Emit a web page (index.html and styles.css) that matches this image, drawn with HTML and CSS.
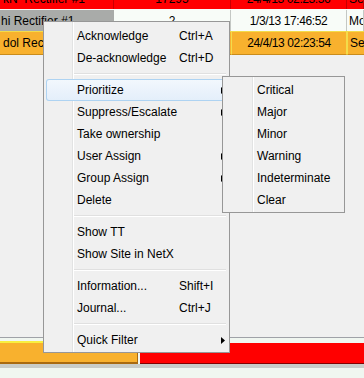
FILE: index.html
```html
<!DOCTYPE html>
<html>
<head>
<meta charset="utf-8">
<link rel="stylesheet" href="styles.css">
</head>
<body>
<div class="screen">
  <div class="grid">
    <div class="row r1">
      <div class="c c1">kN&nbsp; Rectifier #1</div>
      <div class="c c2">17295</div>
      <div class="c c3">24/4/13 02:23:56</div>
      <div class="c c4">Se</div>
    </div>
    <div class="row r2">
      <div class="c c1">hi Rectifier #1</div>
      <div class="c c2">2</div>
      <div class="c c3">1/3/13 17:46:52</div>
      <div class="c c4">Mo</div>
    </div>
    <div class="row r3">
      <div class="c c1">dol Rectifier #1</div>
      <div class="c c2">5</div>
      <div class="c c3">24/4/13 02:23:54</div>
      <div class="c c4">Se</div>
    </div>
  </div>
  <div class="spacer"></div>
  <div class="bottom">
    <div class="brow">
      <div class="bc orange"></div>
      <div class="bc red"></div>
    </div>
    <div class="hbar"></div>
  </div>

  <div class="menu">
    <div class="item"><span>Acknowledge</span><span>Ctrl+A</span></div>
    <div class="item"><span>De-acknowledge</span><span>Ctrl+D</span></div>
    <div class="sep"></div>
    <div class="item hot"><span>Prioritize</span><span></span><svg class="arrow" width="4" height="7" viewBox="0 0 4 7"><polygon points="0,0 4,3.5 0,7" fill="#000"/></svg></div>
    <div class="item"><span>Suppress/Escalate</span><span></span><svg class="arrow" width="4" height="7" viewBox="0 0 4 7"><polygon points="0,0 4,3.5 0,7" fill="#000"/></svg></div>
    <div class="item"><span>Take ownership</span></div>
    <div class="item"><span>User Assign</span><span></span><svg class="arrow" width="4" height="7" viewBox="0 0 4 7"><polygon points="0,0 4,3.5 0,7" fill="#000"/></svg></div>
    <div class="item"><span>Group Assign</span><span></span><svg class="arrow" width="4" height="7" viewBox="0 0 4 7"><polygon points="0,0 4,3.5 0,7" fill="#000"/></svg></div>
    <div class="item"><span>Delete</span></div>
    <div class="sep"></div>
    <div class="item"><span>Show TT</span></div>
    <div class="item"><span>Show Site in NetX</span></div>
    <div class="sep"></div>
    <div class="item"><span>Information...</span><span>Shift+I</span></div>
    <div class="item"><span>Journal...</span><span>Ctrl+J</span></div>
    <div class="sep"></div>
    <div class="item"><span>Quick Filter</span><span></span><svg class="arrow" width="4" height="7" viewBox="0 0 4 7"><polygon points="0,0 4,3.5 0,7" fill="#000"/></svg></div>
  </div>

  <div class="submenu">
    <div class="sitem">Critical</div>
    <div class="sitem">Major</div>
    <div class="sitem">Minor</div>
    <div class="sitem">Warning</div>
    <div class="sitem">Indeterminate</div>
    <div class="sitem">Clear</div>
  </div>
</div>
</body>
</html>
```

FILE: styles.css
```css
html, body {
  margin: 0;
  padding: 0;
}
body {
  background: #f0f0f0;
  font-family: "Liberation Sans", Arial, sans-serif;
  font-size: 12px;
  color: #000;
}
.screen {
  position: relative;
  width: 364px;
  height: 378px;
  overflow: hidden;
  display: flex;
  flex-direction: column;
}
.grid {
  display: flex;
  flex-direction: column;
}
.row {
  display: grid;
  grid-template-columns: 114px 117px 116px 1fr;
}
.c {
  white-space: nowrap;
  overflow: hidden;
  display: flex;
  align-items: center;
  box-sizing: border-box;
}
.c2, .c3 {
  justify-content: center;
}
.c3 {
  letter-spacing: -0.4px;
}
.c4 {
  padding-left: 2px;
}
.r1 {
  height: 22px;
  margin-top: -12px;
  border-bottom: 1px solid #f8fcf8;
  box-sizing: border-box;
}
.r1 .c {
  background: #ff0000;
  border-right: 1px solid #c80000;
}
.r1 .c1 {
  padding-left: 3px;
}
.r2 {
  height: 21px;
}
.r2 .c {
  background: #f8fcf8;
  border-right: 1px solid #c4c8c4;
}
.r2 .c1 {
  background: #a9aba9;
  border-right: 0;
  padding-left: 1px;
}
.r3 {
  height: 24px;
}
.r3 .c {
  background: #f8b12e;
  border-top: 1px solid #f3dc4a;
  border-left: 1px solid #f3dc4a;
  border-bottom: 1px solid #c98c1c;
}
.r3 .c1 {
  border-left: 0;
  padding-left: 3px;
}
.r3 .c3 {
  border-right: 1px solid #f3dc4a;
}
.spacer {
  flex: 1;
}
.bottom {
  border-top: 1px solid #a0a2a8;
  background: #f0f6f0;
  padding-top: 3px;
}
.brow {
  display: flex;
  height: 23px;
  gap: 2px;
}
.bc {
  box-sizing: border-box;
}
.orange {
  width: 138px;
  background: #f8b12e;
  border-top: 2px solid #f8f040;
  border-right: 1px solid #a86a10;
  border-bottom: 2px solid #a86a10;
}
.red {
  flex: 1;
  background: #ff0000;
  border-top: 2px solid #f0f6f0;
  border-bottom: 1px solid #800000;
}
.hbar {
  height: 4px;
  background: #c8ccc8;
  margin-bottom: 10px;
}

/* context menu */
.menu {
  position: absolute;
  left: 43px;
  top: 21px;
  width: 187px;
  box-sizing: border-box;
  border: 1px solid #979797;
  padding: 3px 2px 1px 2px;
  background: linear-gradient(to right, #f0f0f0 28px, #e2e3e3 28px, #e2e3e3 29px, #ffffff 29px, #ffffff 30px, #f0f0f0 30px);
  background-color: #f0f0f0;
}
.item {
  height: 22px;
  display: grid;
  grid-template-columns: 102px 1fr 4px;
  align-items: center;
  padding: 0 2px 0 31px;
  white-space: nowrap;
}
.item.hot {
  background: linear-gradient(#f3f8fd, #e3eefa);
  box-shadow: inset 0 0 0 1px #aed3f2;
  border-radius: 3px;
}
.arrow {
  display: block;
}
.sep {
  height: 1px;
  margin: 4px 1px 4px 28px;
  background: #e0e0e0;
  border-bottom: 1px solid #ffffff;
}
.submenu {
  position: absolute;
  left: 222px;
  top: 76px;
  width: 123px;
  box-sizing: border-box;
  border: 1px solid #979797;
  padding: 2px 2px 1px 2px;
  background: linear-gradient(to right, #f0f0f0 29px, #e2e3e3 29px, #e2e3e3 30px, #ffffff 30px, #ffffff 31px, #f0f0f0 31px);
  background-color: #f0f0f0;
}
.sitem {
  height: 22px;
  display: flex;
  align-items: center;
  padding-left: 32px;
  white-space: nowrap;
}
```
